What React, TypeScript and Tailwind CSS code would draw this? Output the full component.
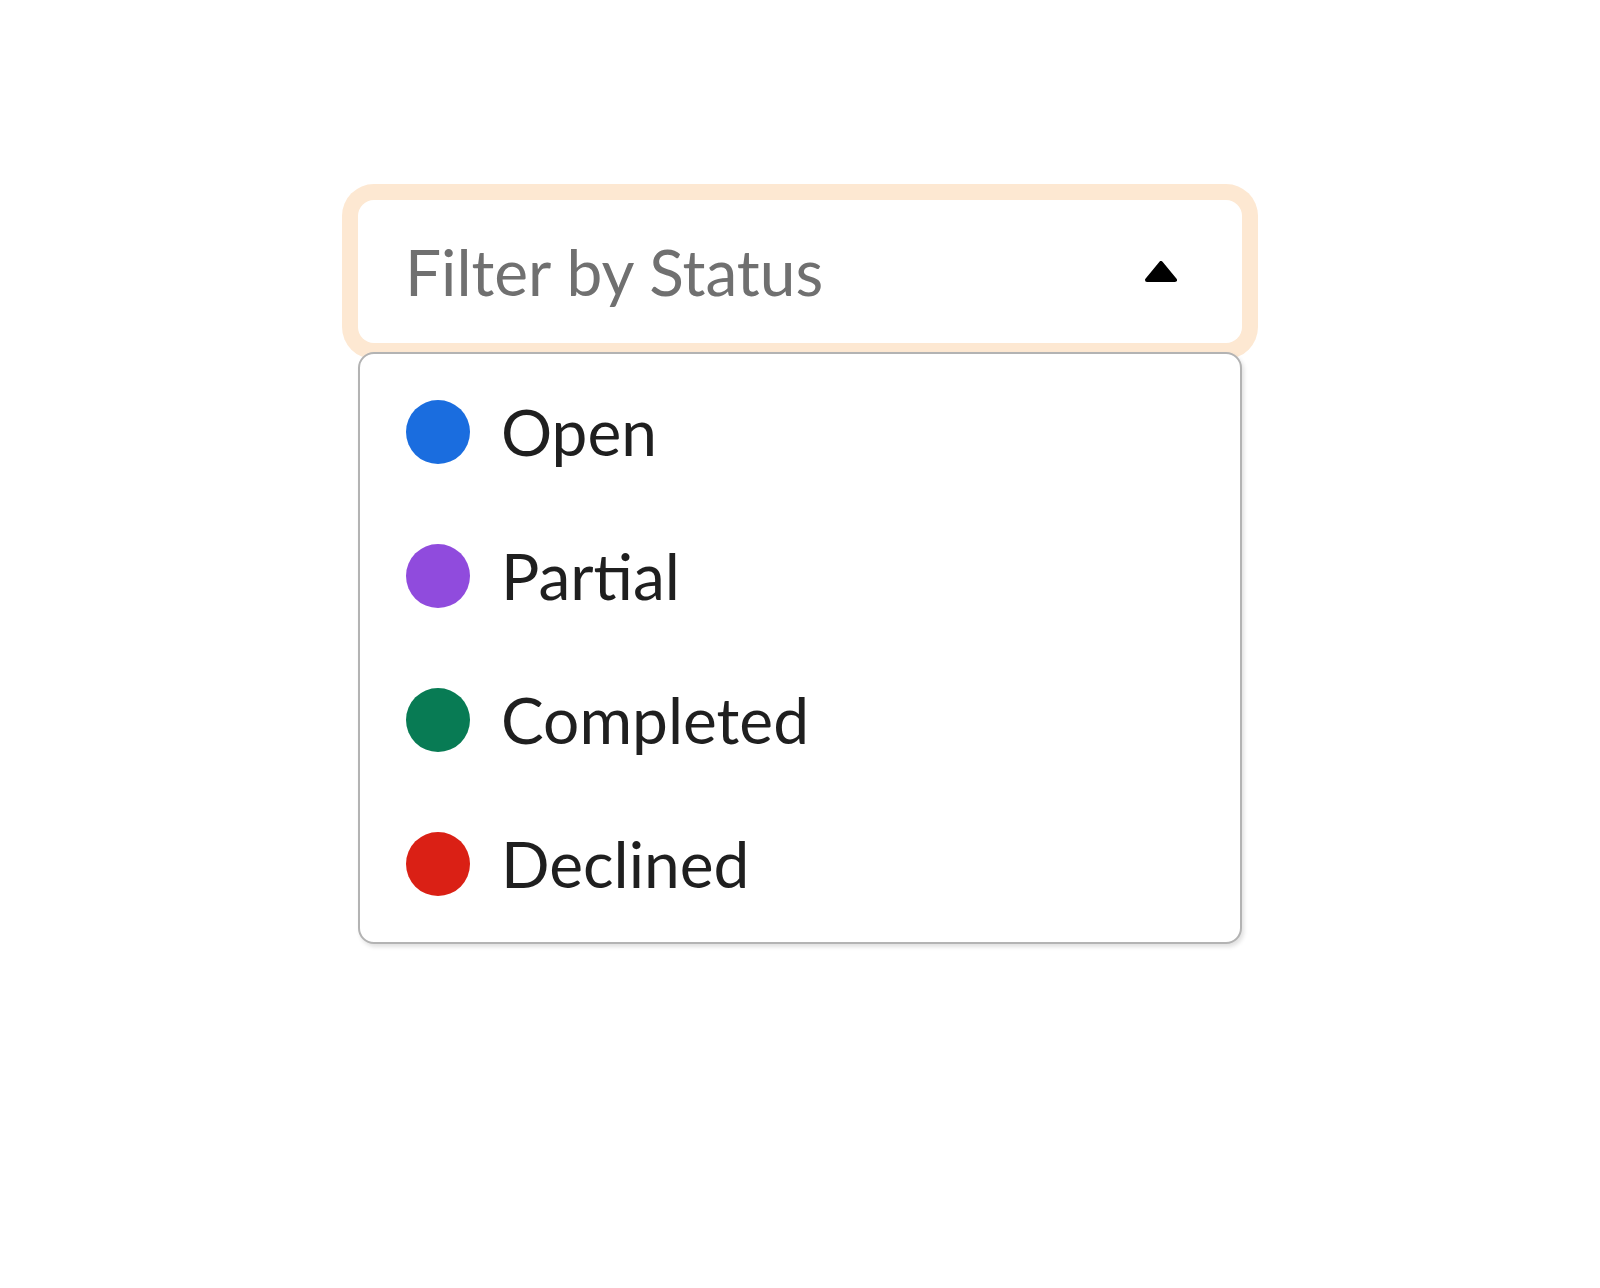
import React from "react";

const items = [
  { label: "Open", color: "bg-[#1a6ddf]" },
  { label: "Partial", color: "bg-[#904bdd]" },
  { label: "Completed", color: "bg-[#087b54]" },
  { label: "Declined", color: "bg-[#da2015]" },
];

export default function App() {
  return (
    <div className="min-h-[1288px] w-full bg-white flex flex-col items-center pt-[184px] font-['Lato',sans-serif]">
      <div className="relative w-[916px]">
        <div className="rounded-[32px] bg-[#fde8d2] p-4">
          <div className="h-[143px] rounded-2xl bg-white flex items-center justify-between pl-[47px] pr-[65px]">
            <span className="text-[64px] leading-none text-[#707070]">Filter by Status</span>
            <svg width="32" height="21" viewBox="0 0 32 21" className="mt-[-1px]">
              <polygon points="16,2 30,19 2,19" fill="#000" stroke="#000" strokeWidth="4" strokeLinejoin="round" />
            </svg>
          </div>
        </div>
        <div className="absolute left-4 right-4 top-[168px] z-10 rounded-2xl border-2 border-[#b3b3b3] bg-white py-[6px] shadow-[2px_3px_4px_rgba(0,0,0,0.12)]">
          {items.map((it) => (
            <div key={it.label} className="h-[144px] flex items-center pl-[46px]">
              <span className={`w-16 h-16 rounded-full ${it.color}`} />
              <span className="ml-[31px] text-[64px] leading-none text-[#1f1f1f]">{it.label}</span>
            </div>
          ))}
        </div>
      </div>
    </div>
  );
}
